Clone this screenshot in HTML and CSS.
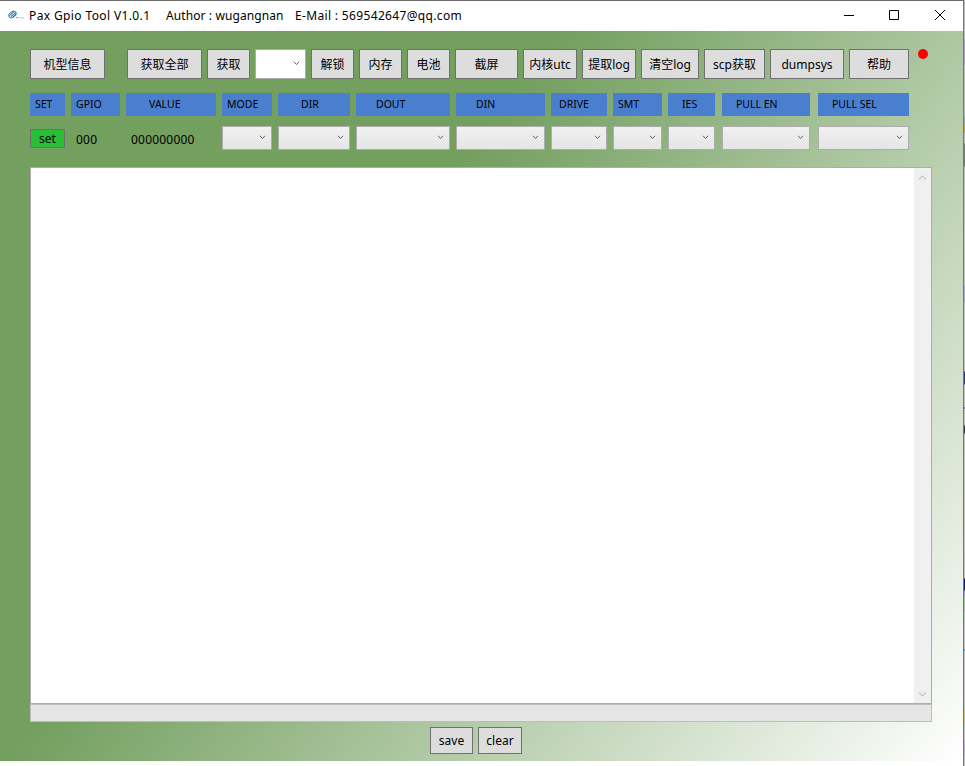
FILE: index.html
```
<!DOCTYPE html>
<html lang="zh-CN">
<head>
<meta charset="utf-8">
<title>Pax Gpio Tool</title>
<link rel="stylesheet" href="styles.css">
</head>
<body>
<svg class="defs" width="0" height="0"><symbol id="chev" viewBox="0 0 7 5"><path d="M1 .8 3.5 3.5 6 .8" fill="none" stroke="#606060" stroke-width="1"/></symbol></svg>
<div class="desktop">
<div class="window">
  <header class="titlebar">
    <svg class="logo" width="16" height="12" viewBox="0 0 16 12" fill="none"><ellipse cx="4.5" cy="5.500" rx="4.200" ry="2.800" transform="rotate(-35 4.5 5.5)" fill="#d3eaf3" stroke="#2f8cae" stroke-width=".9"/><path d="M1.500 6.500 6 2.500M3 7.500 7.800 3.500M4.500 8.500 8 5" stroke="#1f4f7d" stroke-width=".9"/><path d="M8 8.500h2.500M11.500 8.800h1M13.500 9h2" stroke="#8fa9a9"/></svg>
    <div class="title"><span class="t1">Pax Gpio Tool V1.0.1</span><span class="t2">Author : wugangnan</span><span class="t3">E-Mail : 569542647@qq.com</span></div>
    <svg class="controls" width="102" height="12" viewBox="0 0 102 12" fill="none" stroke="#000"><path d="M0 5.500h10M45.500.5h9v9h-9z"/><path d="M91 0l10 10M101 0 91 10"/></svg>
  </header>
  <main class="content">
    <div class="toolbar">
      <button class="btn info">机型信息</button><button class="btn w75">获取全部</button><button class="btn w43">获取</button><div class="combo white"><svg><use href="#chev"/></svg></div><button class="btn w43">解锁</button><button class="btn w43">内存</button><button class="btn w43">电池</button><button class="btn w63">截屏</button><button class="btn w54">内核utc</button><button class="btn w54">提取log</button><button class="btn w58">清空log</button><button class="btn w61">scp获取</button><button class="btn w74">dumpsys</button><button class="btn w60">帮助</button><i class="dot"></i>
    </div>
    <div class="grid heads">
      <div>SET</div><div>GPIO</div><div class="p23">VALUE</div><div>MODE</div><div class="p23">DIR</div><div class="p20">DOUT</div><div class="p20">DIN</div><div class="p8">DRIVE</div><div>SMT</div><div class="p14">IES</div><div class="p14">PULL EN</div><div class="p14">PULL SEL</div>
    </div>
    <div class="grid values">
      <button class="set">set</button><span class="num">000</span><span class="num">000000000</span>
      <div class="combo"><svg><use href="#chev"/></svg></div><div class="combo"><svg><use href="#chev"/></svg></div><div class="combo"><svg><use href="#chev"/></svg></div><div class="combo"><svg><use href="#chev"/></svg></div><div class="combo"><svg><use href="#chev"/></svg></div><div class="combo"><svg><use href="#chev"/></svg></div><div class="combo"><svg><use href="#chev"/></svg></div><div class="combo"><svg><use href="#chev"/></svg></div><div class="combo"><svg><use href="#chev"/></svg></div>
    </div>
    <div class="output"><div class="scroll"><svg viewBox="0 0 9 7"><path d="M1 5.500 4.500 2 8 5.500"/></svg><svg viewBox="0 0 9 7"><path d="M1 1.500 4.500 5 8 1.500"/></svg></div></div>
    <div class="progress"></div>
    <div class="actions"><button class="btn">save</button><button class="btn">clear</button></div>
  </main>
</div>
<div class="edge"></div>
</div>
</body>
</html>
```
FILE: styles.css
```
* { box-sizing: border-box; }
body { margin: 0; background: #fff; font-family: "Noto Sans", "Noto Sans CJK SC", sans-serif; color: #000; overflow: hidden; }
.defs { display: block; height: 0; }
.desktop { display: flex; width: 965px; height: 766px; }
.window { width: 964px; border-top: 1px solid #6c6c6c; border-right: 1px solid #777; }
.edge { width: 1px; background: linear-gradient(#bbb 0 35px, #bbb 39px, #b79bc9 40px 64px, #bbb 65px 116px, #8ba8cc 117px 121px, #c7a043 125px 132px, #bbb 133px 143px, #777 144px 166px, #c4c4c4 167px 285px, #aaabc8 286px 302px, #c4c4c4 303px 371px, #333580 372px 384px, #c4c4c4 385px 407px, #225 408px, #c4c4c4 409px 425px, #334 426px 433px, #c4c4c4 434px 578px, #171772 579px 590px, #9d9bca 591px 596px, #9fc79a 597px 611px, #c4c4c4 612px 649px, #176194 650px, #c4c4c4 651px 708px, #c9c383 709px 724px, #c4c4c4 725px 740px, #bbb1d4 741px 755px, #c4c4c4 756px); }
.titlebar { display: flex; height: 30px; background: #fff; }
.logo { margin: 8px 0 0 8px; }
.title { margin-left: 5px; width: 815px; display: flex; font-size: 12px; line-height: 30px; white-space: pre; }
.t1 { width: 137px; letter-spacing: .38px; }
.t2 { width: 129px; letter-spacing: .1px; }
.t3 { letter-spacing: .34px; }
.controls { margin-top: 9px; }
.content { height: 730px; padding: 18px 0 0 30px; background: linear-gradient(127.163deg, #739f5f 37%, #fff 100%); }
button { margin: 0; padding: 0; font-family: inherit; color: #000; }
.toolbar { display: flex; gap: 5px; height: 30px; }
.btn { flex: none; border: 1px solid #707070; background: #ddd; font-size: 12px; line-height: 28px; white-space: nowrap; }
.toolbar .btn { padding-top: 2px; line-height: 26px; }
.info { width: 75px; margin-right: 17px; }
.w75 { width: 75px; } .w43 { width: 43px; } .w63 { width: 63px; } .w54 { width: 54px; }
.w58 { width: 58px; } .w61 { width: 61px; } .w74 { width: 74px; } .w60 { width: 60px; }
.dot { width: 10px; height: 10px; margin-left: 3.500px; border-radius: 50%; background: #f00; }
.combo { display: flex; justify-content: flex-end; height: 24px; padding: 8px 5px 0 0; border: 1px solid #acacac; background: linear-gradient(#f0f0f0, #e5e5e5); }
.combo svg { width: 7px; height: 5px; }
.combo.white { width: 51px; height: 30px; padding-top: 11px; background: #fff; }
.grid { display: grid; grid-template-columns: 41px 55px 96px 56px 78px 100px 95px 62px 55px 54px 96px 91px; }
.grid > * { margin-right: 6px; }
.grid > :nth-child(10) { margin-right: 7px; }
.grid > :nth-child(11) { margin-right: 8px; }
.grid > :last-child { margin-right: 0; }
.heads { height: 23px; margin-top: 14px; font-size: 10.500px; line-height: 22px; }
.heads > div { background: #4a7fcf; padding-left: 5px; white-space: nowrap; }
.heads .p8 { padding-left: 8px; } .heads .p14 { padding-left: 14px; }
.heads .p20 { padding-left: 20px; } .heads .p23 { padding-left: 23px; }
.values { height: 24px; margin-top: 10px; }
.set { height: 19px; margin-top: 3px; border: 1px solid #707070; background: #28be38; font-size: 12px; line-height: 17px; }
.num { padding-left: 5px; font-size: 12px; line-height: 27px; letter-spacing: .2px; }
.output { display: flex; justify-content: flex-end; width: 902px; height: 537px; margin-top: 17px; border: 1px solid #abadb3; background: #fff; }
.scroll { width: 17px; display: flex; flex-direction: column; justify-content: space-between; align-items: center; padding: 6px 0 5px; background: #f0f0f0; }
.scroll svg { width: 9px; height: 7px; fill: none; stroke: #c6c6c6; stroke-width: 1.2; }
.progress { width: 902px; height: 18px; border: 1px solid #bcbcbc; background: #e6e6e6; }
.actions { display: flex; gap: 5px; margin: 5px 0 0 400px; }
.actions .btn { width: 43px; height: 27px; line-height: 25px; }
.actions .btn + .btn { width: 44px; }
```
